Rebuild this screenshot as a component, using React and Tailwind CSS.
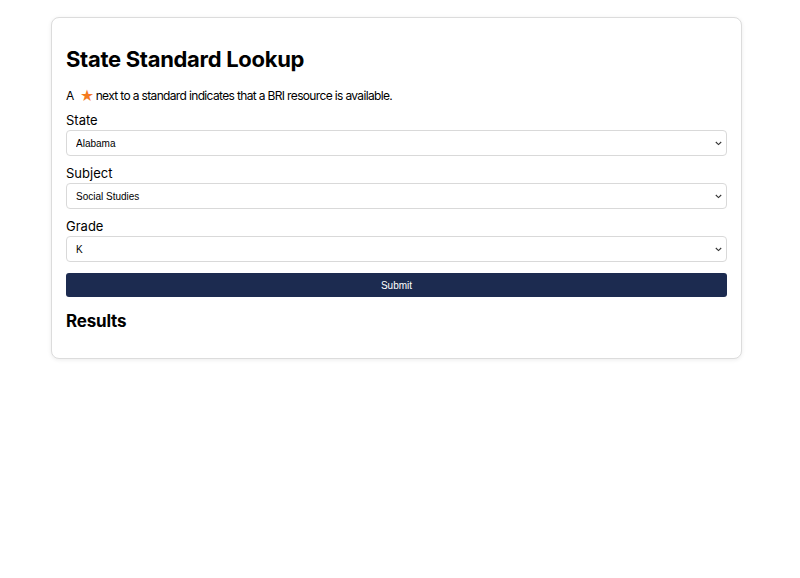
import React, { useState } from 'react';

function Field({ label, value, options, onChange }) {
  return (
    <div className="mb-[9px]">
      <label className="block text-[13px] leading-[16px] mb-[2px] text-black">{label}</label>
      <div className="relative">
        <select
          value={value}
          onChange={(e) => onChange(e.target.value)}
          className="block w-full h-[26px] pl-[9px] pr-[20px] appearance-none bg-white border border-[#d9d9d9] rounded-[4px] text-[10px] text-black font-['Liberation_Sans',Arial,sans-serif]"
        >
          {options.map((o) => (
            <option key={o} value={o}>
              {o}
            </option>
          ))}
        </select>
        <svg
          className="absolute right-[5px] top-[11px] pointer-events-none"
          width="7"
          height="5"
          viewBox="0 0 7 5"
          fill="none"
        >
          <path d="M0.8 1 L3.5 3.6 L6.2 1" stroke="#333" strokeWidth="1.1" />
        </svg>
      </div>
    </div>
  );
}

export default function App() {
  const [state, setState] = useState('Alabama');
  const [subject, setSubject] = useState('Social Studies');
  const [grade, setGrade] = useState('K');

  return (
    <div className="min-h-[578px] bg-white pt-[17px] font-['Inter','Noto_Sans',sans-serif]">
      <div className="ml-[51px] w-[691px] bg-white border border-[#dcdcdc] rounded-[8px] shadow-[0_1px_4px_rgba(0,0,0,0.08)] pt-[27px] px-[14px] pb-[26px]">
        <h1 className="text-[22px] leading-[28px] font-bold text-black tracking-[-0.3px]">State Standard Lookup</h1>
        <p className="mt-[15px] mb-[8px] text-[12px] leading-[16px] text-black tracking-[-0.65px] flex items-center">
          A
          <span className="text-[#f47a1f] text-[14px] ml-[6px] mr-[2px]">★</span>
          next to a standard indicates that a BRI resource is available.
        </p>

        <Field label="State" value={state} onChange={setState} options={['Alabama', 'Alaska', 'Arizona', 'Arkansas', 'California']} />
        <Field label="Subject" value={subject} onChange={setSubject} options={['Social Studies', 'English Language Arts', 'Science']} />
        <Field label="Grade" value={grade} onChange={setGrade} options={['K', '1', '2', '3', '4', '5']} />

        <button
          type="button"
          className="mt-[11px] block w-full h-[24px] bg-[#1c2b50] text-white rounded-[3px] text-[10px] font-['Liberation_Sans',Arial,sans-serif]"
        >
          Submit
        </button>

        <h2 className="mt-[13px] text-[17px] leading-[22px] font-bold text-black tracking-[-0.2px]">Results</h2>
      </div>
    </div>
  );
}
